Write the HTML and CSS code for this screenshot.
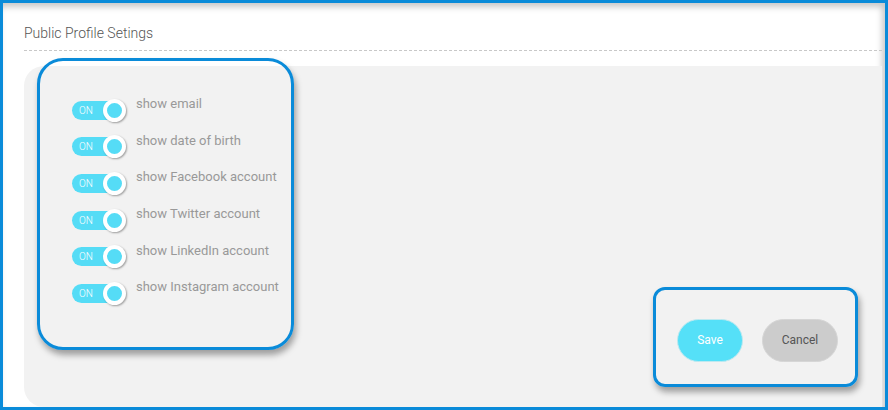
FILE: index.html
```html
<!DOCTYPE html>
<html>
<head>
<meta charset="utf-8">
<link rel="stylesheet" href="styles.css">
</head>
<body>
<div class="frame">
  <div class="header"><span class="title">Public Profile Setings</span></div>
  <div class="panel">
    <div class="list">
      <div class="row"><div class="toggle"><span class="on">ON</span><span class="knob"></span></div><span class="label">show email</span></div>
      <div class="row"><div class="toggle"><span class="on">ON</span><span class="knob"></span></div><span class="label">show date of birth</span></div>
      <div class="row"><div class="toggle"><span class="on">ON</span><span class="knob"></span></div><span class="label">show Facebook account</span></div>
      <div class="row"><div class="toggle"><span class="on">ON</span><span class="knob"></span></div><span class="label">show Twitter account</span></div>
      <div class="row"><div class="toggle"><span class="on">ON</span><span class="knob"></span></div><span class="label">show LinkedIn account</span></div>
      <div class="row"><div class="toggle"><span class="on">ON</span><span class="knob"></span></div><span class="label">show Instagram account</span></div>
    </div>
    <div class="actions">
      <button class="btn save">Save</button>
      <button class="btn cancel">Cancel</button>
    </div>
  </div>
  <div class="hl hl-list"></div>
  <div class="hl hl-actions"></div>
</div>
</body>
</html>
```
FILE: styles.css
```css
* { box-sizing: border-box; }
html, body { margin: 0; padding: 0; }
body { width: 888px; height: 410px; overflow: hidden; background: #fff; font-family: Roboto, "Liberation Sans", sans-serif; }
.frame {
  position: relative;
  width: 888px; height: 410px;
  border: 3px solid #0a8bd9;
  background: #fff;
  box-shadow: inset -3px 4px 6px rgba(0,0,0,0.22);
  display: flex; flex-direction: column;
  padding-left: 21px;
  padding-right: 3px;
}
.header {
  padding-top: 22px;
  padding-bottom: 9px;
  border-bottom: 1px dashed #c8c8c8;
}
.title { display: block; font-size: 14px; line-height: 16px; color: #555; font-weight: 300; }
.panel {
  margin-top: 15px;
  flex: 1;
  background: #f2f2f2;
  border-radius: 20px 0 0 20px;
  padding: 26px 44px 0 48px;
  display: flex; flex-direction: column;
}
.row { height: 36.6px; display: flex; align-items: center; }
.toggle {
  position: relative;
  width: 51px; height: 19px;
  border-radius: 10px;
  background: #55dcf6;
  flex: none;
}
.on { position: absolute; left: 7px; top: 4px; font-size: 10px; line-height: 11px; color: #fff; font-weight: 300; }
.knob {
  position: absolute; right: -3px; top: -2px;
  width: 23px; height: 23px; border-radius: 50%;
  background: #55dcf6;
  border: 4px solid #fff;
  box-shadow: 1px 1px 2px rgba(0,0,0,0.35);
}
.label { margin-left: 13px; margin-bottom: 12px; font-size: 13px; line-height: 16px; color: #999; }
.actions { margin-top: 7px; display: flex; justify-content: flex-end; gap: 19px; }
.btn {
  height: 43px; border-radius: 22px; border: 1px solid #d6d6d6;
  font-family: Roboto, "Liberation Sans", sans-serif; font-size: 12px;
  padding: 0; cursor: pointer;
}
.save { width: 66px; background: #55e0f8; color: #fff; border-color: #bde9f0; }
.cancel { width: 76px; background: #cccccc; color: #555; }
.hl {
  position: absolute;
  border: 3px solid #0a8bd9;
  box-shadow: 2px 5px 6px rgba(0,0,0,0.35);
}
.hl-list { left: 34px; top: 55px; width: 257px; height: 292px; border-radius: 26px; }
.hl-actions { left: 650px; top: 284px; width: 205px; height: 100px; border-radius: 12px; }
```
